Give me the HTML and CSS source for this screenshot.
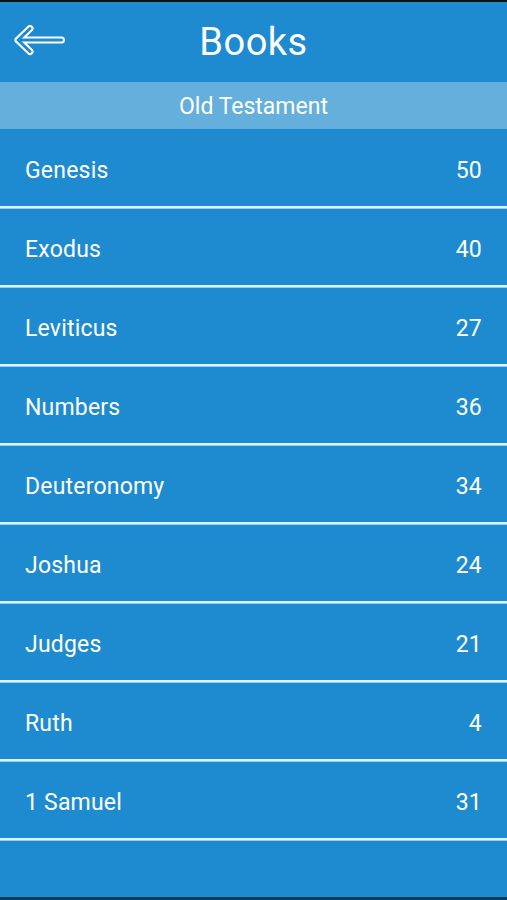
FILE: index.html
```html
<!DOCTYPE html>
<html lang="en">
<head>
    <meta charset="UTF-8">
    <meta name="viewport" content="width=device-width, initial-scale=1.0">
    <title>Books</title>

    <link rel="stylesheet" href="styles.css">
</head>
<body>
    <div class="screen">
        <div class="topbar">
            <a class="back" href="#">
                <svg width="52" height="32" viewBox="0 0 52 32">
                    <g fill="none" stroke-linecap="round" stroke-linejoin="round">
                        <path d="M47.5 15 H4 M16 3.5 L4 15 L16 26.5" stroke="#fff" stroke-width="7"/>
                        <path d="M47.5 15 H4 M16 3.5 L4 15 L16 26.5" stroke="#1e8bd0" stroke-width="3"/>
                    </g>
                </svg>
            </a>
            <h1 class="title">Books</h1>
        </div>

        <div class="section">Old Testament</div>

        <ul class="books">
            <li class="book"><span>Genesis</span><span>50</span></li>
            <li class="book"><span>Exodus</span><span>40</span></li>
            <li class="book"><span>Leviticus</span><span>27</span></li>
            <li class="book"><span>Numbers</span><span>36</span></li>
            <li class="book"><span>Deuteronomy</span><span>34</span></li>
            <li class="book"><span>Joshua</span><span>24</span></li>
            <li class="book"><span>Judges</span><span>21</span></li>
            <li class="book"><span>Ruth</span><span>4</span></li>
            <li class="book"><span>1 Samuel</span><span>31</span></li>
        </ul>

        <div class="filler"></div>
    </div>
</body>
</html>
```

FILE: styles.css
```css
body
{
    margin: 0;
    padding: 0;
    background: #111;
    font-family: Roboto, 'Noto Sans', sans-serif;
    color: #fff;
}

.screen
{
    height: 895px;
    margin-top: 2px;
    display: flex;
    flex-direction: column;
    background: #1e8bd0;
    border-bottom: 3px solid #0e3b5c;
}

.topbar
{
    height: 80px;
    display: flex;
    align-items: center;
    justify-content: center;
    position: relative;
}

.back
{
    position: absolute;
    left: 14px;
    top: 23px;
    display: flex;
}

.title
{
    margin: 0;
    font-size: 38px;
    font-weight: 400;
    letter-spacing: 0.5px;
}

.section
{
    height: 47px;
    display: flex;
    align-items: center;
    justify-content: center;
    background: #65afdd;
    font-size: 23px;
    padding-top: 1px;
    box-sizing: border-box;
}

.books
{
    list-style: none;
    margin: 0;
    padding: 0;
}

.book
{
    height: 79px;
    box-sizing: border-box;
    display: flex;
    align-items: center;
    justify-content: space-between;
    padding: 5px 25px 0;
    font-size: 23px;
    letter-spacing: 0.2px;
    border-bottom: 2px solid #dff2ff;
    box-shadow: 0 1px 0 #8fd0f5;
}

.filler
{
    flex: 1;
}
```
